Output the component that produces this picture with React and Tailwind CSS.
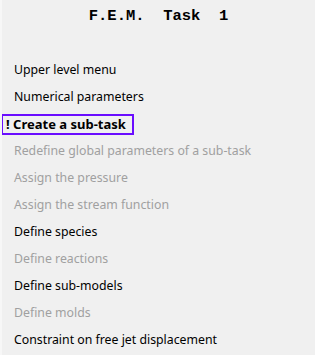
import React from "react";

const items = [
  { label: "Upper level menu" },
  { label: "Numerical parameters" },
  { label: "Create a sub-task", active: true },
  { label: "Redefine global parameters of a sub-task", disabled: true },
  { label: "Assign the pressure", disabled: true },
  { label: "Assign the stream function", disabled: true },
  { label: "Define species" },
  { label: "Define reactions", disabled: true },
  { label: "Define sub-models" },
  { label: "Define molds", disabled: true },
  { label: "Constraint on free jet displacement" },
];

const App = () => {
  return (
    <div className="w-[315px] h-[355px] bg-[#f0f0f0] border-l-2 border-[#f7f7f7] overflow-hidden">
      {/* Title */}
      <h1 className="pt-[5px] h-[57px] text-center text-[15.5px] font-bold text-black whitespace-pre font-['Liberation_Mono',monospace]">
        {"F.E.M.  Task  1"}
      </h1>

      {/* Menu */}
      <ul className="flex flex-col font-['Noto_Sans',sans-serif] text-[12.3px]">
        {items.map((item) =>
          item.active ? (
            <li key={item.label} className="h-[27px] flex items-center -ml-[1px]">
              <span className="h-[21px] w-[133px] border-2 border-[#6a0dff] flex items-center pl-[3px] text-[13px] font-bold text-black">
                {"! " + item.label}
              </span>
            </li>
          ) : (
            <li
              key={item.label}
              className={`h-[27px] flex items-center pl-[12px] ${
                item.disabled ? "text-[#a0a0a0]" : "text-black"
              }`}
            >
              {item.label}
            </li>
          )
        )}
      </ul>
    </div>
  );
};

export default App;
